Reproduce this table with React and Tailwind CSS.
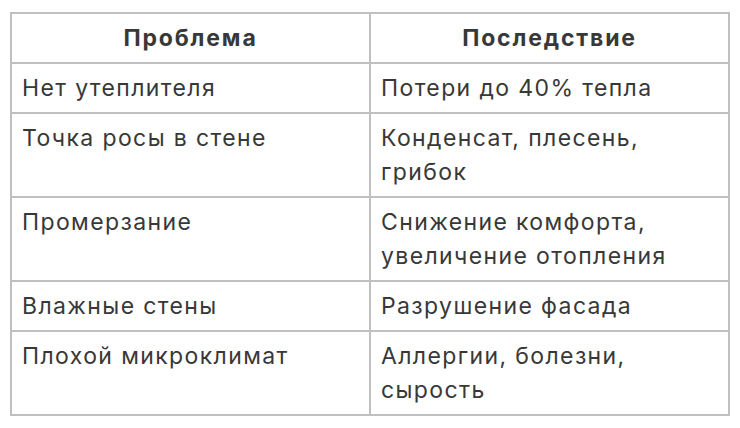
const ROWS = [
  ['Нет утеплителя', 'Потери до 40% тепла'],
  ['Точка росы в стене', 'Конденсат, плесень, грибок'],
  ['Промерзание', 'Снижение комфорта, увеличение отопления'],
  ['Влажные стены', 'Разрушение фасада'],
  ['Плохой микроклимат', 'Аллергии, болезни, сырость'],
]

export default function App() {
  return (
    <div className="min-h-screen bg-white pt-[12px] px-[10px] [font-family:Inter,'Noto_Sans',sans-serif] text-[#383838]">
      <table className="w-[720px] table-fixed border-collapse border-2 border-[#c0c0c0] text-[23px] leading-[34px] tracking-[0.06em]">
        <thead>
          <tr>
            <th className="w-1/2 border-2 border-[#c0c0c0] px-[10px] py-[7px] text-center font-bold tracking-[0.08em]">Проблема</th>
            <th className="w-1/2 border-2 border-[#c0c0c0] px-[10px] py-[7px] text-center font-bold tracking-[0.08em]">Последствие</th>
          </tr>
        </thead>
        <tbody>
          {ROWS.map(([problem, effect], i) => (
            <tr key={i}>
              <td className="border-2 border-[#c0c0c0] px-[10px] py-[7px] align-top">{problem}</td>
              <td className="border-2 border-[#c0c0c0] px-[10px] py-[7px] align-top">{effect}</td>
            </tr>
          ))}
        </tbody>
      </table>
    </div>
  )
}
